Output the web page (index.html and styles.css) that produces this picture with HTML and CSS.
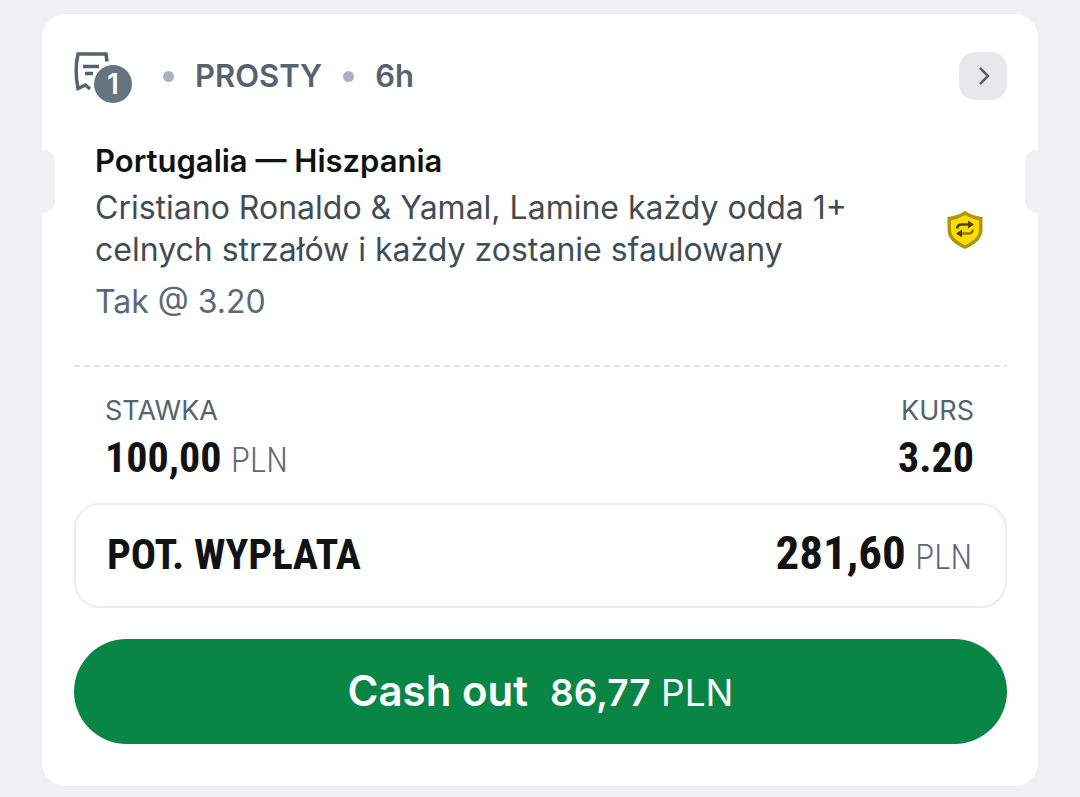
FILE: index.html
```html
<!DOCTYPE html>
<html lang="pl">
<head>
<meta charset="utf-8">
<meta name="viewport" content="width=device-width, initial-scale=1">
<title>Kupon</title>
<link rel="stylesheet" href="styles.css">
</head>
<body>
<main class="coupon">
  <header class="coupon-header">
    <span class="slip">
      <svg class="slip-icon" viewBox="0 0 60 52" aria-hidden="true">
        <path class="slip-line" d="M33 9.500 32 2H4C1.500 13 1.500 24 4 36.500L11.500 33L16 37"/>
        <path class="slip-line" d="M9 14.500H25M11 21.500H19"/>
        <circle class="slip-ring" cx="39" cy="32" r="21"/>
        <circle class="slip-disc" cx="39" cy="32" r="19"/>
      </svg>
      <span class="slip-count">1</span>
    </span>
    <span class="dot"></span>
    <span class="meta">PROSTY</span>
    <span class="dot"></span>
    <span class="meta">6h</span>
    <button class="open-button" type="button" aria-label="Otwórz kupon">
      <svg class="chevron" viewBox="0 0 24 24" aria-hidden="true"><path d="M9 4 17 12 9 20"/></svg>
    </button>
  </header>
  <section class="event">
    <div class="event-text">
      <h1 class="event-title">Portugalia — Hiszpania</h1>
      <p class="event-market">Cristiano Ronaldo &amp; Yamal, Lamine każdy odda 1+ celnych strzałów i każdy zostanie sfaulowany</p>
      <p class="event-pick">Tak @ 3.20</p>
    </div>
    <svg class="shield" viewBox="0 0 36 40" aria-hidden="true">
      <path class="shield-edge" d="M18 0C23 3.500 29 5 35.500 6V18.500C35.500 27.500 28.500 33.500 18 38C7.500 33.500 0.500 27.500 0.500 18.500V6C7 5 13 3.500 18 0Z"/>
      <path class="shield-face" d="M18 4C22.500 6.700 27 8.400 32 9.200V18.500C32 25.500 26.500 30.300 18 34.200C9.500 30.300 4 25.500 4 18.500V9.200C9 8.400 13.500 6.700 18 4Z"/>
      <path class="swap-line" d="M10 17.500C10.500 14.500 12 13.500 14.500 13.500H21.500"/>
      <path class="swap-head" d="M21 9.500 27 13.500 21 17.500Z"/>
      <path class="swap-line swap-back" d="M26 18.500C25.500 21.500 24 22.500 21.500 22.500H14"/>
      <path class="swap-head" d="M15 18.500 9 22.500 15 26.500Z"/>
    </svg>
  </section>
  <div class="divider"></div>
  <dl class="figures">
    <div class="figure">
      <dt class="label">STAWKA</dt>
      <dd class="amount"><b>100,00</b> <span class="currency">PLN</span></dd>
    </div>
    <div class="figure figure-end">
      <dt class="label">KURS</dt>
      <dd class="amount"><b>3.20</b></dd>
    </div>
  </dl>
  <div class="payout">
    <b class="payout-label">POT. WYPŁATA</b>
    <span class="payout-sum"><b class="payout-value">281,60</b> <span class="currency">PLN</span></span>
  </div>
  <button class="cashout" type="button">
    <span class="cashout-label">Cash out</span>
    <span class="cashout-sum"><b>86,77</b> PLN</span>
  </button>
</main>
</body>
</html>
```
FILE: styles.css
```css
* {
  box-sizing: border-box;
  margin: 0;
}

body {
  padding: 14px 42px 12px;
  background: #eff0f2;
  color: #101214;
  font-family: Inter, "Liberation Sans", sans-serif;
}

.coupon {
  position: relative;
  padding: 38px 31px 42px 32px;
  border-radius: 24px;
  background: #fff;
}

/* Side notches of the ticket */
.coupon::before,
.coupon::after {
  content: "";
  position: absolute;
  top: 136px;
  width: 13px;
  height: 63px;
  background: #eff0f2;
}

.coupon::before {
  left: 0;
  border-radius: 0 12px 12px 0;
}

.coupon::after {
  right: 0;
  border-radius: 12px 0 0 12px;
}

.coupon-header {
  display: flex;
  align-items: center;
  gap: 21px;
  color: #55636f;
}

.slip {
  position: relative;
  width: 68px;
  height: 48px;
}

.slip-icon {
  display: block;
  width: 60px;
  height: 52px;
}

.slip-line {
  fill: none;
  stroke: #55636f;
  stroke-width: 3.500;
}

.slip-ring {
  fill: #fff;
}

.slip-disc {
  fill: #647480;
}

.slip-count {
  position: absolute;
  top: 16px;
  left: 20px;
  width: 38px;
  color: #fff;
  font-size: 28px;
  font-weight: 600;
  line-height: 32px;
  text-align: center;
}

.dot {
  width: 11px;
  height: 11px;
  border-radius: 50%;
  background: #aab3ba;
}

.meta {
  font-size: 31px;
  font-weight: 600;
  line-height: 40px;
}

.open-button {
  display: grid;
  place-items: center;
  width: 48px;
  height: 48px;
  margin-left: auto;
  padding: 0;
  border: 0;
  border-radius: 16px;
  background: #e6e8ea;
}

.chevron {
  width: 24px;
  height: 24px;
  fill: none;
  stroke: #55636f;
  stroke-width: 2.500;
}

.event {
  display: flex;
  align-items: center;
  justify-content: space-between;
  padding: 39px 24px 0 21px;
}

.event-text {
  max-width: 780px;
}

.event-title {
  font-size: 31px;
  font-weight: 600;
  line-height: 44px;
}

.event-market {
  margin-top: 4px;
  color: #414c55;
  font-size: 32px;
  line-height: 42px;
}

.event-pick {
  margin-top: 10px;
  color: #5b6974;
  font-size: 32px;
  line-height: 42px;
}

.shield {
  flex: none;
  width: 36px;
  height: 40px;
}

.shield-edge {
  fill: #ad9809;
}

.shield-face {
  fill: #fddd00;
}

.swap-line {
  fill: none;
  stroke: #4d4300;
  stroke-width: 2.500;
}

.swap-back {
  stroke: #8b7900;
}

.swap-head {
  fill: #4d4300;
}

.divider {
  height: 2px;
  margin-top: 42px;
  background: repeating-linear-gradient(90deg, #e3e4e5 0 6px, transparent 6px 10px);
}

.figures {
  display: flex;
  justify-content: space-between;
  padding: 27px 33px 0 31px;
}

.figure-end {
  text-align: right;
}

.label {
  color: #55636f;
  font-size: 27px;
  line-height: 34px;
}

.amount {
  margin: 5px 0 0;
  font-family: "Roboto Condensed", "Liberation Sans Narrow", Roboto, sans-serif;
  font-size: 42px;
  line-height: 50px;
}

.currency {
  color: #5b6974;
  font-size: 35px;
  font-weight: 300;
}

.payout {
  display: flex;
  align-items: baseline;
  justify-content: space-between;
  margin-top: 17px;
  padding: 20px 33px 20px 31px;
  border: 2px solid #ededee;
  border-radius: 26px;
  font-family: "Roboto Condensed", "Liberation Sans Narrow", Roboto, sans-serif;
  font-size: 42px;
  line-height: 56px;
}

.payout-value {
  font-size: 47px;
}

.cashout {
  display: flex;
  align-items: baseline;
  justify-content: center;
  gap: 22px;
  width: 100%;
  margin-top: 31px;
  padding: 28px 24px 27px;
  border: 0;
  border-radius: 53px;
  background: #098545;
  color: #fff;
  font-family: inherit;
  line-height: 48px;
}

.cashout-label {
  font-size: 42px;
  font-weight: 600;
}

.cashout-sum {
  font-size: 37px;
}

.cashout-sum b {
  font-weight: 600;
}
```
